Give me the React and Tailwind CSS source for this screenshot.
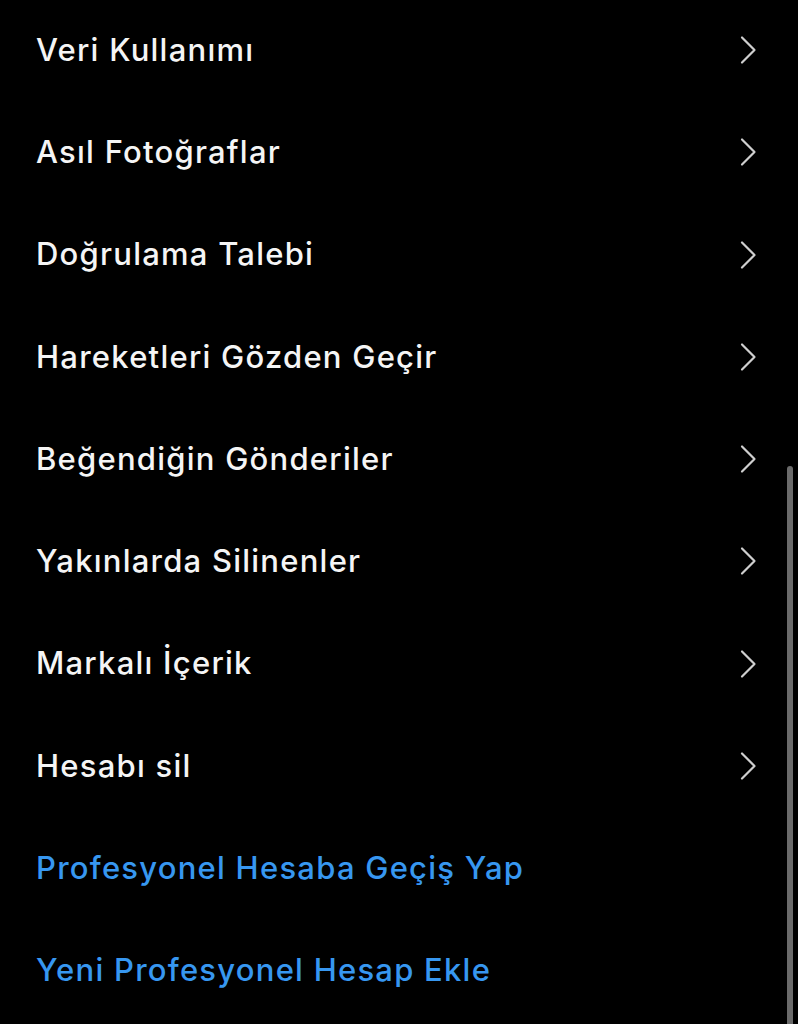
const rows = [
    'Veri Kullanımı',
    'Asıl Fotoğraflar',
    'Doğrulama Talebi',
    'Hareketleri Gözden Geçir',
    'Beğendiğin Gönderiler',
    'Yakınlarda Silinenler',
    'Markalı İçerik',
    'Hesabı sil',
];

const links = ['Profesyonel Hesaba Geçiş Yap', 'Yeni Profesyonel Hesap Ekle'];

const Chevron = () => (
    <svg width="20" height="32" viewBox="0 0 20 32" fill="none" className="text-[#cfcfcf]">
        <polyline
            points="4,3.5 16.5,16 4,28.5"
            stroke="currentColor"
            strokeWidth="2.2"
            strokeLinecap="round"
            strokeLinejoin="round"
        />
    </svg>
);

const App = () => {
    return (
        <div
            className="relative h-[1024px] w-[798px] overflow-hidden bg-black"
            style={{ fontFamily: 'Inter, "Noto Sans", sans-serif' }}
        >
            <div className="-mt-px flex flex-col">
                {rows.map((label) => (
                    <div key={label} className="flex h-[102.25px] items-center justify-between pl-9 pr-[40px]">
                        <span className="text-[31px] font-medium tracking-[0.04em] text-[#f5f5f5]">{label}</span>
                        <Chevron />
                    </div>
                ))}
                {links.map((label) => (
                    <div key={label} className="flex h-[102.25px] items-center pl-9">
                        <span className="text-[31px] font-medium tracking-[0.04em] text-[#3797f0]">{label}</span>
                    </div>
                ))}
            </div>

            {/* scroll indicator */}
            <div className="absolute bottom-0 right-[5px] top-[466px] w-[6px] rounded-t-full bg-[#6b6b6b]" />
        </div>
    );
};

export default App;
